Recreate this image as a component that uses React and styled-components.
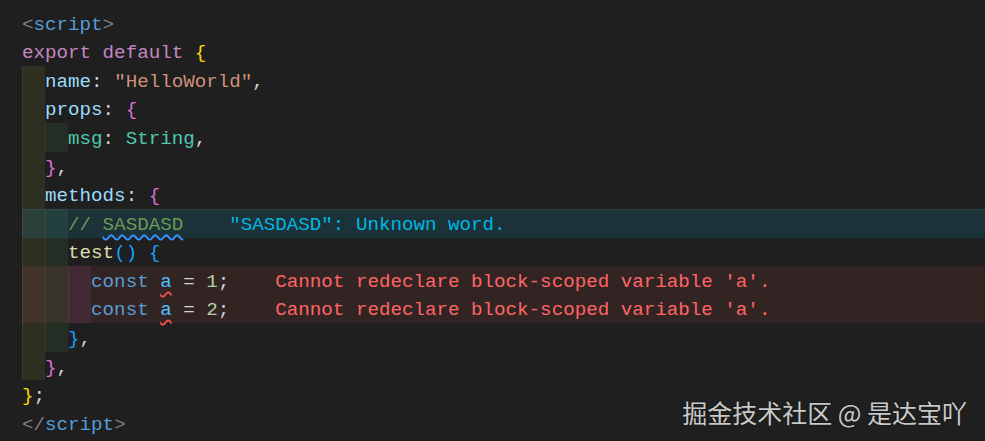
import React from "react";
import styled, { createGlobalStyle } from "styled-components";

const C = {
  punct: "#808080",
  tag: "#569cd6",
  kw: "#c586c0",
  gold: "#ffd700",
  orchid: "#da70d6",
  blue: "#179fff",
  prop: "#9cdcfe",
  str: "#ce9178",
  text: "#d4d4d4",
  type: "#4ec9b0",
  comment: "#6a9955",
  fn: "#dcdcaa",
  storage: "#569cd6",
  constVar: "#4fc1ff",
  num: "#b5cea8",
};

const lines = [
  { indent: 0, tokens: [["<", C.punct], ["script", C.tag], [">", C.punct]] },
  { indent: 0, tokens: [["export default ", C.kw], ["{", C.gold]] },
  { indent: 1, tokens: [["name", C.prop], [": ", C.text], ['"HelloWorld"', C.str], [",", C.text]] },
  { indent: 1, tokens: [["props", C.prop], [": ", C.text], ["{", C.orchid]] },
  { indent: 2, tokens: [["msg", C.type], [": ", C.text], ["String", C.type], [",", C.text]] },
  { indent: 1, tokens: [["}", C.orchid], [",", C.text]] },
  { indent: 1, tokens: [["methods", C.prop], [": ", C.text], ["{", C.orchid]] },
  {
    indent: 2,
    kind: "info",
    tokens: [["// ", C.comment], ["SASDASD", C.comment, "#3794ff"]],
    message: '"SASDASD": Unknown word.',
  },
  { indent: 2, tokens: [["test", C.fn], ["() {", C.blue]] },
  {
    indent: 3,
    kind: "error",
    tokens: [["const ", C.storage], ["a", C.constVar, "#f14c4c"], [" = ", C.text], ["1", C.num], [";", C.text]],
    message: "Cannot redeclare block-scoped variable 'a'.",
  },
  {
    indent: 3,
    kind: "error",
    tokens: [["const ", C.storage], ["a", C.constVar, "#f14c4c"], [" = ", C.text], ["2", C.num], [";", C.text]],
    message: "Cannot redeclare block-scoped variable 'a'.",
  },
  { indent: 2, tokens: [["}", C.blue], [",", C.text]] },
  { indent: 1, tokens: [["}", C.orchid], [",", C.text]] },
  { indent: 0, tokens: [["}", C.gold], [";", C.text]] },
  { indent: 0, tokens: [["</", C.punct], ["script", C.tag], [">", C.punct]] },
];

const guideColors = [
  "rgba(255, 255, 64, 0.07)",
  "rgba(127, 255, 127, 0.07)",
  "rgba(255, 127, 255, 0.07)",
];

const lineBg = {
  info: "rgba(0, 183, 228, 0.125)",
  error: "rgba(228, 84, 84, 0.106)",
};

const msgColor = {
  info: "#00b7e4",
  error: "#ff6464",
};

function App() {
  return (
    <>
      <GlobalStyle />
      <Editor>
        <Gutter />
        <Code>
          {lines.map((line, i) => (
            <Line key={i} $kind={line.kind}>
              {Array.from({ length: line.indent }).map((_, g) => (
                <Guide key={g} $level={g} />
              ))}
              {line.tokens.map(([t, color, wave], j) => (
                <Tok key={j} $c={color} $wave={wave}>
                  {t}
                </Tok>
              ))}
              {line.message && (
                <Message $kind={line.kind}>{line.message}</Message>
              )}
            </Line>
          ))}
        </Code>
        <Watermark>掘金技术社区 @ 是达宝吖</Watermark>
      </Editor>
    </>
  );
}

export default App;

const GlobalStyle = createGlobalStyle`
  html, body {
    margin: 0;
    padding: 0;
    background: #1f1f1f;
  }
`;

const Editor = styled.div`
  position: relative;
  width: 985px;
  height: 441px;
  overflow: hidden;
  display: flex;
  background: #1f1f1f;
  padding-top: 9px;
  box-sizing: border-box;
`;

const Gutter = styled.div`
  width: 22px;
  flex-shrink: 0;
`;

const Code = styled.div`
  flex: 1;
  display: flex;
  flex-direction: column;
  font-family: "Liberation Mono", monospace;
  font-size: 19.2px;
  color: #d4d4d4;
`;

const Line = styled.div`
  height: 28.57px;
  display: flex;
  align-items: center;
  white-space: pre;
  background: ${(p) => (p.$kind ? lineBg[p.$kind] : "transparent")};
  box-shadow: ${(p) =>
    p.$kind === "info" ? "inset 0 1px 0 rgba(255, 255, 255, 0.06)" : "none"};
`;

const Guide = styled.span`
  align-self: stretch;
  width: 23.04px;
  flex-shrink: 0;
  background: ${(p) => guideColors[p.$level]};
  box-shadow: inset 1px 0 0 rgba(255, 255, 255, 0.07);
`;

const Tok = styled.span`
  position: relative;
  top: 1.5px;
  color: ${(p) => p.$c};
  text-decoration: ${(p) => (p.$wave ? "underline wavy" : "none")};
  text-decoration-color: ${(p) => p.$wave || "transparent"};
  text-decoration-thickness: 1.5px;
  text-underline-offset: 4px;
`;

const Message = styled.span`
  position: relative;
  top: 1.5px;
  margin-left: 46px;
  color: ${(p) => msgColor[p.$kind]};
`;

const Watermark = styled.div`
  position: absolute;
  right: 18px;
  bottom: 11px;
  font-family: "Noto Sans CJK SC", sans-serif;
  font-size: 25px;
  color: rgba(235, 235, 235, 0.85);
  text-shadow: 0 0 2px rgba(0, 0, 0, 0.4);
`;
